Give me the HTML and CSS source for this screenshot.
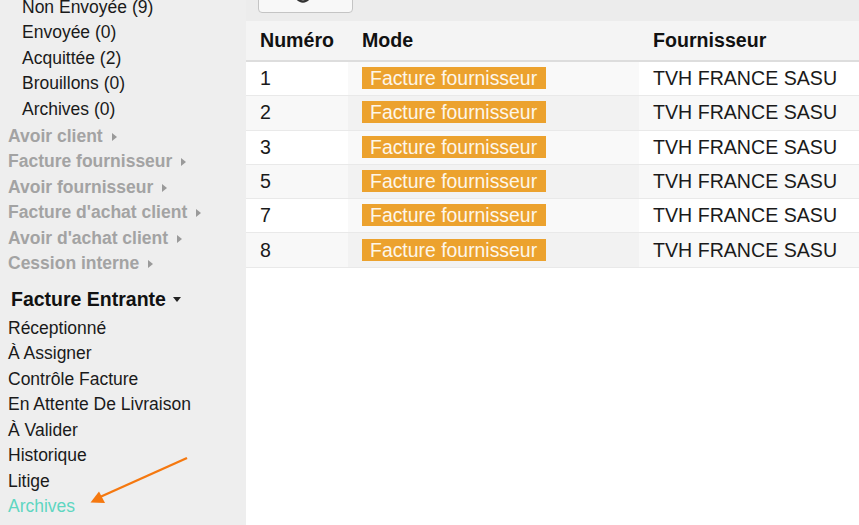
FILE: index.html
```html
<!DOCTYPE html>
<html lang="fr">
<head>
    <meta charset="UTF-8">
    <meta name="viewport" content="width=device-width, initial-scale=1.0">
    <title>Facturation</title>
    <link rel="stylesheet" href="styles.css">
</head>
<body>
    <div class="page">
        <aside class="sidebar">
            <ul class="sub-list">
                <li>Non Envoyée (9)</li>
                <li>Envoyée (0)</li>
                <li>Acquittée (2)</li>
                <li>Brouillons (0)</li>
                <li>Archives (0)</li>
            </ul>
            <ul class="group-list">
                <li>Avoir client <span class="tri"></span></li>
                <li>Facture fournisseur <span class="tri"></span></li>
                <li>Avoir fournisseur <span class="tri"></span></li>
                <li>Facture d'achat client <span class="tri"></span></li>
                <li>Avoir d'achat client <span class="tri"></span></li>
                <li>Cession interne <span class="tri"></span></li>
            </ul>
            <div class="section-title">Facture Entrante <span class="caret"></span></div>
            <ul class="menu-list">
                <li>Réceptionné</li>
                <li>À Assigner</li>
                <li>Contrôle Facture</li>
                <li>En Attente De Livraison</li>
                <li>À Valider</li>
                <li>Historique</li>
                <li>Litige</li>
                <li class="active">Archives</li>
            </ul>

            <!-- annotation arrow pointing at the active entry -->
            <svg class="pointer" width="200" height="60" viewBox="80 450 120 60">
                <line x1="187" y1="458" x2="100" y2="497" stroke="#f5780f" stroke-width="2.4"/>
                <polygon points="90.5,502.5 99,491.5 105,503" fill="#f5780f"/>
            </svg>
        </aside>

        <main class="content">
            <div class="toolbar">
                <button class="btn-refresh" title="Rafraîchir">
                    <svg width="20" height="20" viewBox="0 0 20 20">
                        <path d="M15.5 6.2 A7 7 0 1 0 16.8 12" fill="none" stroke="#333" stroke-width="2.4"/>
                        <polygon points="17.5,1.8 17.5,8.5 11,8.5" fill="#333"/>
                    </svg>
                </button>
            </div>

            <table class="grid">
                <thead>
                    <tr>
                        <th class="col-num">Numéro</th>
                        <th class="col-mode">Mode</th>
                        <th>Fournisseur</th>
                    </tr>
                </thead>
                <tbody>
                    <tr>
                        <td>1</td>
                        <td class="sorted"><span class="badge">Facture fournisseur</span></td>
                        <td>TVH FRANCE SASU</td>
                    </tr>
                    <tr>
                        <td>2</td>
                        <td class="sorted"><span class="badge">Facture fournisseur</span></td>
                        <td>TVH FRANCE SASU</td>
                    </tr>
                    <tr>
                        <td>3</td>
                        <td class="sorted"><span class="badge">Facture fournisseur</span></td>
                        <td>TVH FRANCE SASU</td>
                    </tr>
                    <tr>
                        <td>5</td>
                        <td class="sorted"><span class="badge">Facture fournisseur</span></td>
                        <td>TVH FRANCE SASU</td>
                    </tr>
                    <tr>
                        <td>7</td>
                        <td class="sorted"><span class="badge">Facture fournisseur</span></td>
                        <td>TVH FRANCE SASU</td>
                    </tr>
                    <tr>
                        <td>8</td>
                        <td class="sorted"><span class="badge">Facture fournisseur</span></td>
                        <td>TVH FRANCE SASU</td>
                    </tr>
                </tbody>
            </table>
        </main>
    </div>
</body>
</html>
```

FILE: styles.css
```css
body {
    font-family: 'Liberation Sans', Arial, sans-serif;
    margin: 0;
    color: #1a1a1a;
    overflow: hidden;
}
ul {
    list-style: none;
    margin: 0;
    padding: 0;
}
.page {
    display: grid;
    grid-template-columns: 246px 1fr;
    height: 525px;
}

/* sidebar */
.sidebar {
    position: relative;
    background: #eeeeee;
    font-size: 17.5px;
}
.sub-list {
    margin-top: -5px;
    padding-left: 22px;
}
.sub-list li {
    line-height: 25.45px;
}
.menu-list li {
    line-height: 25.5px;
}
.group-list {
    margin-top: 1.5px;
    padding-left: 8px;
}
.group-list li {
    line-height: 25.5px;
    font-weight: bold;
    color: #a3a3a3;
}
.tri {
    display: inline-block;
    width: 0;
    height: 0;
    margin-left: 4px;
    border-left: 5px solid #9a9a9a;
    border-top: 4px solid transparent;
    border-bottom: 4px solid transparent;
    vertical-align: 1px;
}
.section-title {
    margin-top: 9px;
    padding-left: 11px;
    font-size: 19.5px;
    font-weight: bold;
    line-height: 26px;
    color: #111;
}
.caret {
    display: inline-block;
    width: 0;
    height: 0;
    margin-left: 2px;
    border-top: 5px solid #222;
    border-left: 4px solid transparent;
    border-right: 4px solid transparent;
    vertical-align: 4px;
}
.menu-list {
    margin-top: 4px;
    padding-left: 8px;
}
.menu-list li.active {
    color: #5fd6c1;
}
.pointer {
    position: absolute;
    left: 80px;
    top: 450px;
    width: 120px;
    height: 60px;
}

/* main area */
.content {
    background: #fff;
}
.toolbar {
    display: flex;
    align-items: flex-end;
    box-sizing: border-box;
    height: 21px;
    padding: 0 0 8px 12px;
    background: #ececec;
}
.btn-refresh {
    display: flex;
    flex-shrink: 0;
    align-items: flex-end;
    justify-content: center;
    width: 95px;
    height: 34px;
    padding: 0 0 8px;
    background: #f8f8f8;
    border: 1px solid #c4c4c4;
    border-radius: 4px;
}
.btn-refresh svg {
    margin-right: 6px;
}

.grid {
    width: 100%;
    border-collapse: collapse;
    font-size: 19.6px;
}
.grid th {
    height: 39px;
    padding: 0 14px;
    text-align: left;
    background: #f4f4f4;
    border-bottom: 2px solid #dddddd;
    color: #111;
}
.grid .col-num {
    width: 73px;
}
.grid .col-mode {
    width: 263px;
}
.grid td {
    height: 33.3px;
    padding: 0 14px;
    border-top: 1px solid #e9e9e9;
    background: #fff;
}
.grid td.sorted {
    background: #f9f9f9;
}
.grid tbody tr:nth-child(even) td {
    background: #f8f8f8;
}
.grid tbody tr:nth-child(even) td.sorted {
    background: #f2f2f2;
}
.grid tbody tr:first-child td {
    border-top: none;
}
.grid tbody tr:last-child td {
    border-bottom: 1px solid #e9e9e9;
}
.badge {
    display: inline-block;
    padding: 0 9px 0 8px;
    line-height: 22px;
    font-size: 19.4px;
    background: #eca22e;
    color: #fdf6ea;
}
```
